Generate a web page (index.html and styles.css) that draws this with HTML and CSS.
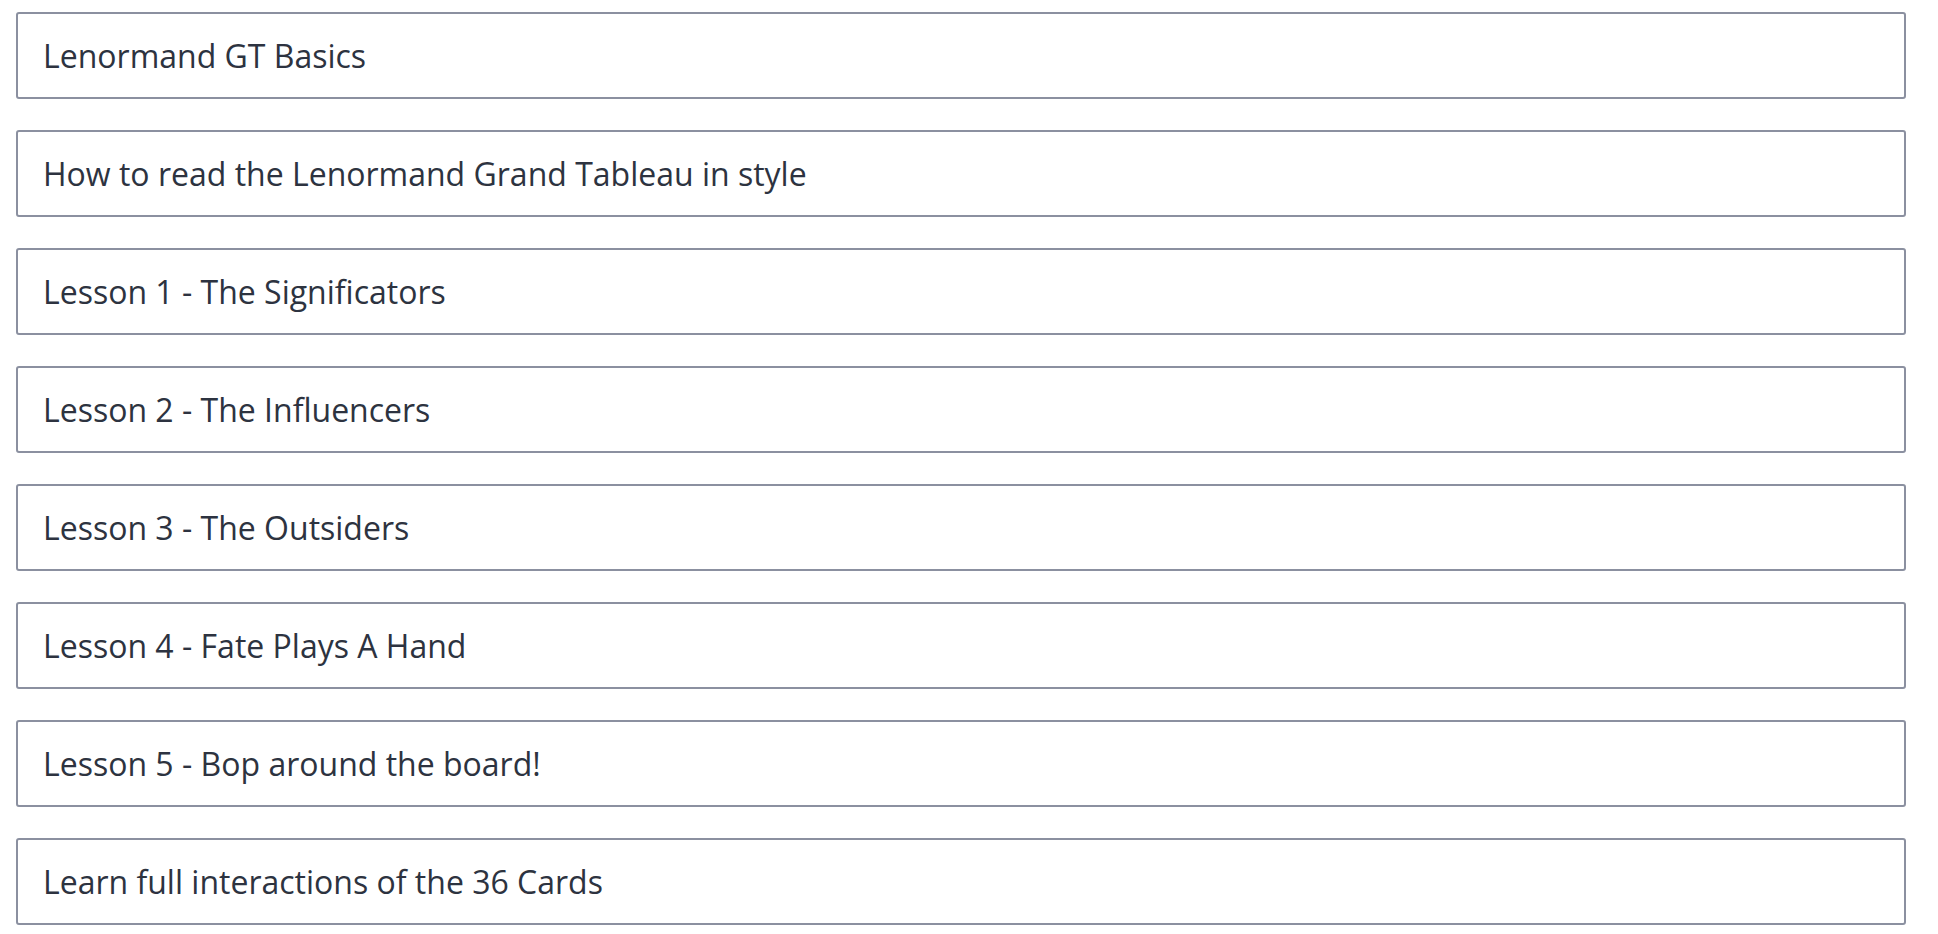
FILE: index.html
```html
<!DOCTYPE html>
<html lang="en">
<head>
    <meta charset="UTF-8">
    <meta name="viewport" content="width=device-width, initial-scale=1.0">
    <title>Lenormand Lessons</title>
    <link rel="stylesheet" href="styles.css">
</head>
<body>
    <ul class="lesson-list">
        <li class="lesson">Lenormand GT Basics</li>
        <li class="lesson">How to read the Lenormand Grand Tableau in style</li>
        <li class="lesson">Lesson 1 - The Significators</li>
        <li class="lesson">Lesson 2 - The Influencers</li>
        <li class="lesson">Lesson 3 - The Outsiders</li>
        <li class="lesson">Lesson 4 - Fate Plays A Hand</li>
        <li class="lesson">Lesson 5 - Bop around the board!</li>
        <li class="lesson">Learn full interactions of the 36 Cards</li>
    </ul>
</body>
</html>
```

FILE: styles.css
```css
* {
    box-sizing: border-box;
}

body {
    margin: 0;
    background-color: #ffffff;
    font-family: "Open Sans", "Noto Sans", sans-serif;
    color: #2d3340;
}

.lesson-list {
    list-style: none;
    margin: 0;
    padding: 12px 32px 0 16px;
    display: flex;
    flex-direction: column;
    gap: 31px;
}

.lesson {
    height: 87px;
    display: flex;
    align-items: center;
    padding: 0 25px;
    border: 2px solid #8b90a0;
    border-radius: 3px;
    font-size: 32px;
}
```
